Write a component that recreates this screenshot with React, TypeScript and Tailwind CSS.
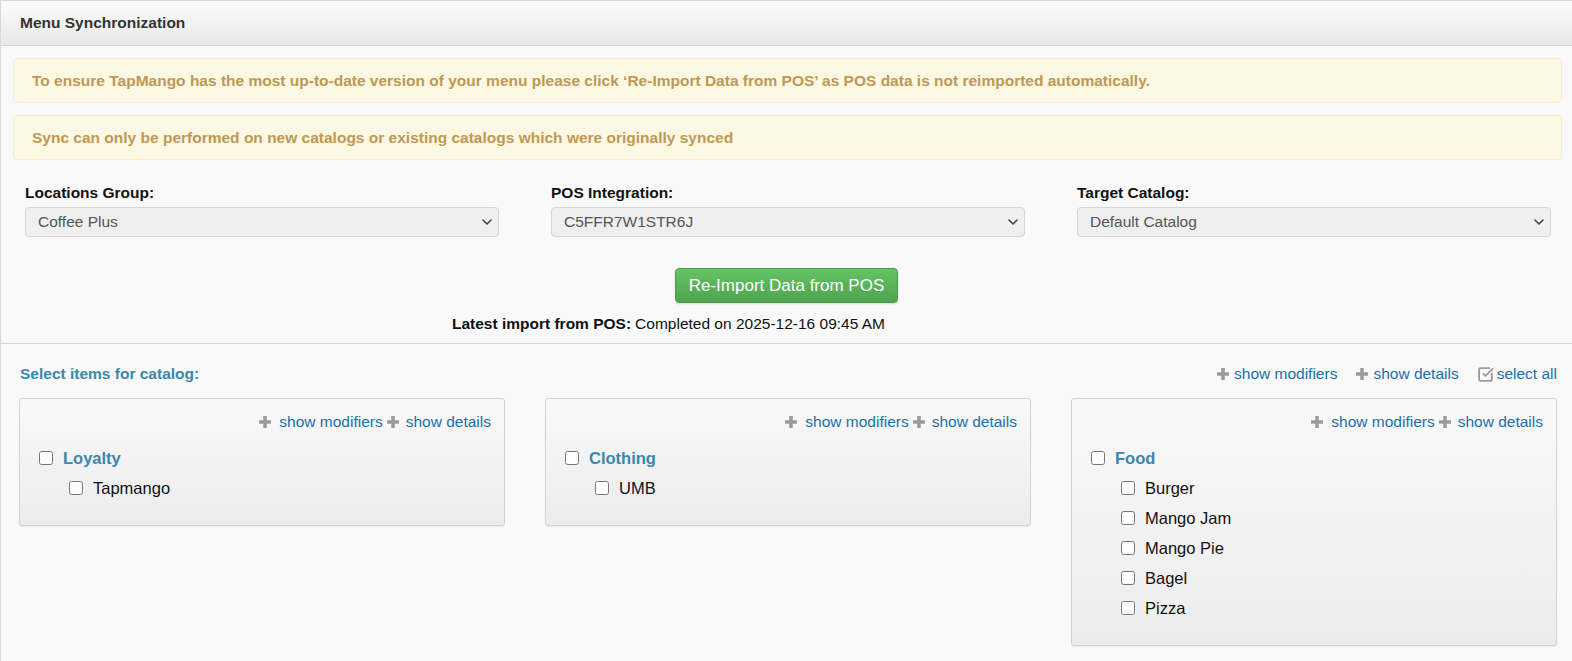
import React from 'react';
import { ChevronDown, SquareCheckBig } from 'lucide-react';

type Category = { id: string; name: string; items: string[] };

const categories: Category[] = [
  { id: 'loyalty', name: 'Loyalty', items: ['Tapmango'] },
  { id: 'clothing', name: 'Clothing', items: ['UMB'] },
  { id: 'food', name: 'Food', items: ['Burger', 'Mango Jam', 'Mango Pie', 'Bagel', 'Pizza'] },
];

const selects = [
  { label: 'Locations Group:', value: 'Coffee Plus' },
  { label: 'POS Integration:', value: 'C5FFR7W1STR6J' },
  { label: 'Target Catalog:', value: 'Default Catalog' },
];

function Plus() {
  return (
    <svg width="12" height="12" viewBox="0 0 12 12" className="shrink-0">
      <rect x="4.25" y="0" width="3.5" height="12" fill="#9a9a9a" />
      <rect x="0" y="4.25" width="12" height="3.5" fill="#9a9a9a" />
    </svg>
  );
}

function Check() {
  return <input type="checkbox" className="w-[14px] h-[14px] m-0 shrink-0" />;
}

function Select({ label, value }: { label: string; value: string }) {
  return (
    <div>
      <div className="text-[15.5px] font-bold text-[#111] leading-[20px] mb-[4px]">{label}</div>
      <div className="relative">
        <select
          disabled
          defaultValue={value}
          className="w-full h-[30px] appearance-none rounded-[4px] border border-[#d6d6d6] bg-[#efefef] pl-[12px] text-[15.5px] text-[#555] opacity-100"
        >
          <option>{value}</option>
        </select>
        <ChevronDown className="absolute right-[4px] top-[7px] w-[16px] h-[16px] text-[#444]" strokeWidth={2.4} />
      </div>
    </div>
  );
}

function CategoryCard({ cat }: { cat: Category }) {
  return (
    <div className="rounded-[3px] border border-[#d3d3d3] bg-gradient-to-b from-[#f9f9f9] to-[#ececec] pl-[19px] pr-[13px] pt-[12px] pb-[22px] shadow-[0_1px_1px_rgba(0,0,0,0.05)]">
      <div className="flex justify-end items-center h-[22px] text-[15.5px] text-[#1a70a8]">
        <Plus />
        <span className="ml-[8px]">show modifiers</span>
        <span className="ml-[4px]"><Plus /></span>
        <span className="ml-[7px]">show details</span>
      </div>
      <div className="mt-[10px] flex items-center h-[30px] gap-[10px]">
        <Check />
        <span className="text-[16.5px] font-bold text-[#3a87ad]">{cat.name}</span>
      </div>
      {cat.items.map((item) => (
        <div key={item} className="flex items-center h-[30px] gap-[10px] pl-[30px]">
          <Check />
          <span className="text-[16.5px] text-[#111]">{item}</span>
        </div>
      ))}
    </div>
  );
}

export default function App() {
  return (
    <div className="min-h-[661px] bg-[#f9f9f9] border-l border-t border-[#d8d8d8] font-['Liberation_Sans',Arial,sans-serif]">
      <div className="h-[45px] flex items-center px-[19px] bg-gradient-to-b from-[#fcfcfc] to-[#e8e8e8] border-b border-[#d4d4d4]">
        <h1 className="text-[15.5px] font-bold text-[#333]">Menu Synchronization</h1>
      </div>

      <div className="pl-[12px] pr-[10px] pt-[12px] flex flex-col gap-[12px]">
        <div className="h-[45px] flex items-center pl-[18px] rounded-[4px] border border-[#faebcc] bg-[#fcf8e3] text-[15.5px] font-bold text-[#c09853]">
          To ensure TapMango has the most up-to-date version of your menu please click ‘Re-Import Data from POS’ as POS data is not reimported automatically.
        </div>
        <div className="h-[45px] flex items-center pl-[18px] rounded-[4px] border border-[#faebcc] bg-[#fcf8e3] text-[15.5px] font-bold text-[#c09853]">
          Sync can only be performed on new catalogs or existing catalogs which were originally synced
        </div>
      </div>

      <div className="grid grid-cols-3 gap-[52px] pl-[24px] pr-[21px] pt-[23px]">
        {selects.map((s) => (
          <Select key={s.label} label={s.label} value={s.value} />
        ))}
      </div>

      <div className="flex justify-center pt-[31px]">
        <button className="h-[35px] px-[13px] rounded-[4px] border border-[#4a9a4a] bg-gradient-to-b from-[#62c462] to-[#51a351] text-[17px] text-white shadow-[0_1px_2px_rgba(0,0,0,0.15)]">
          Re-Import Data from POS
        </button>
      </div>

      <div className="flex justify-center items-center h-[22px] mt-[10px] text-[15.5px] text-[#111]">
        <span className="font-bold">Latest import from POS:</span>
        <span className="ml-[4px]">Completed on 2025-12-16 09:45 AM</span>
        <span className="inline-block w-[236px]" />
      </div>

      <div className="mt-[8px] border-t border-[#d6d6d6]" />

      <div className="flex items-center justify-between h-[22px] mt-[19px] pl-[19px] pr-[15px]">
        <span className="text-[15.5px] font-bold text-[#3a87ad]">Select items for catalog:</span>
        <div className="flex items-center text-[15.5px] text-[#1a70a8]">
          <Plus />
          <span className="ml-[5px]">show modifiers</span>
          <span className="ml-[19px]"><Plus /></span>
          <span className="ml-[5px]">show details</span>
          <SquareCheckBig className="ml-[18px] w-[17px] h-[17px] text-[#9a9a9a]" strokeWidth={2.6} />
          <span className="ml-[3px]">select all</span>
        </div>
      </div>

      <div className="grid grid-cols-3 gap-[40px] items-start pl-[18px] pr-[15px] mt-[13px] pb-[20px]">
        {categories.map((c) => (
          <CategoryCard key={c.id} cat={c} />
        ))}
      </div>
    </div>
  );
}
